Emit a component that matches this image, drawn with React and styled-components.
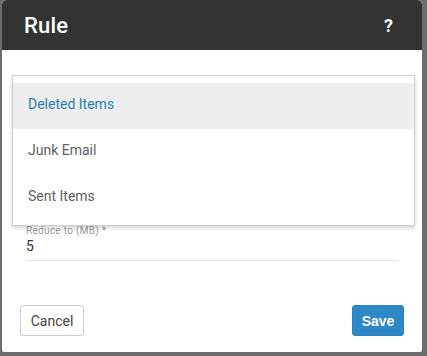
import React from "react";
import styled, { createGlobalStyle } from "styled-components";

const GlobalStyle = createGlobalStyle`
	html, body {
		margin: 0;
		padding: 0;
		background: #6d6d6d;
		font-family: Roboto, "Liberation Sans", sans-serif;
	}
`;

const Screen = styled.div`
	width: 427px;
	height: 356px;
	padding: 0 5px 4px 2px;
	box-sizing: border-box;
`;

const Dialog = styled.div`
	position: relative;
	display: flex;
	flex-direction: column;
	width: 420px;
	height: 352px;
	background: #fff;
	border-radius: 5px 5px 2px 2px;
	overflow: hidden;
`;

const Header = styled.div`
	display: flex;
	align-items: center;
	justify-content: space-between;
	height: 50px;
	padding: 0 29px 0 22px;
	background: #333333;
	color: #fff;
`;

const Title = styled.h1`
	margin: 0;
	font-size: 22px;
	font-weight: 500;
	letter-spacing: 0.2px;
`;

const Help = styled.span`
	font-size: 18px;
	font-weight: 700;
`;

const Body = styled.div`
	flex: 1;
	padding: 176px 24px 0;
`;

const Field = styled.div`
	display: flex;
	flex-direction: column;
	border-bottom: 1px solid #e4e4e4;
`;

const Label = styled.label`
	font-size: 10px;
	line-height: 10px;
	color: #9c9c9c;
	letter-spacing: 0.3px;
`;

const Value = styled.div`
	font-size: 14px;
	line-height: 20px;
	height: 24px;
	color: #333;
`;

const Menu = styled.ul`
	position: absolute;
	top: 75px;
	left: 10px;
	width: 403px;
	margin: 0;
	padding: 7px 0 4px;
	list-style: none;
	box-sizing: border-box;
	background: #fff;
	border: 1px solid #cfcfcf;
	box-shadow: 0 2px 4px rgba(0, 0, 0, 0.18);
`;

const MenuItem = styled.li`
	display: flex;
	align-items: center;
	height: 46px;
	padding: 0 0 4px 15px;
	box-sizing: border-box;
	font-size: 14px;
	color: ${(p) => (p.$active ? "#2a7db4" : "#5f5f5f")};
	background: ${(p) => (p.$active ? "#eeeeee" : "transparent")};
`;

const Footer = styled.div`
	display: flex;
	justify-content: space-between;
	padding: 0 18px 16px;
`;

const Button = styled.button`
	height: 31px;
	padding: 0;
	border-radius: 3px;
	font-size: 14px;
	cursor: pointer;
`;

const CancelButton = styled(Button)`
	width: 64px;
	background: #fff;
	border: 1px solid #cccccc;
	color: #444;
	font-family: Roboto, sans-serif;
`;

const SaveButton = styled(Button)`
	width: 52px;
	background: #2f88c6;
	border: 1px solid #2c82bf;
	color: #fff;
	font-family: "Liberation Sans", Arial, sans-serif;
	font-weight: 700;
`;

const folders = ["Deleted Items", "Junk Email", "Sent Items"];

export default function App() {
	return (
		<Screen>
			<GlobalStyle />
			<Dialog>
				<Header>
					<Title>Rule</Title>
					<Help>?</Help>
				</Header>
				<Body>
					<Field>
						<Label>Reduce to (MB) *</Label>
						<Value>5</Value>
					</Field>
				</Body>
				<Footer>
					<CancelButton>Cancel</CancelButton>
					<SaveButton>Save</SaveButton>
				</Footer>
				<Menu>
					{folders.map((f, i) => (
						<MenuItem key={f} $active={i === 0}>
							{f}
						</MenuItem>
					))}
				</Menu>
			</Dialog>
		</Screen>
	);
}
